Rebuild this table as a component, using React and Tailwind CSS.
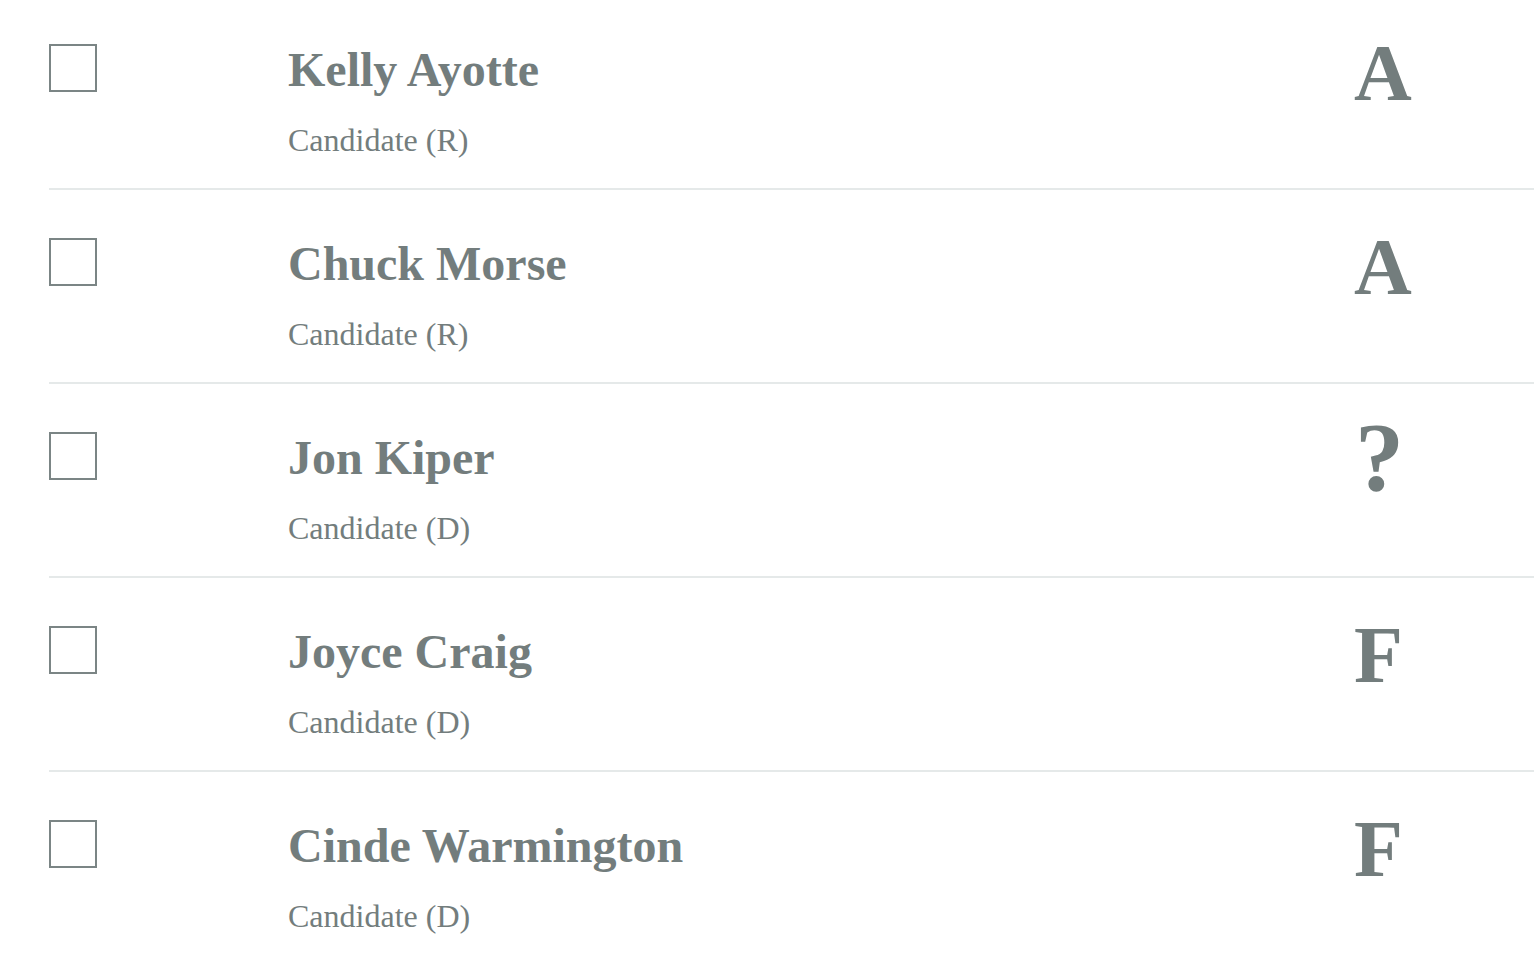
import React from "react";

const rows = [
  { name: "Kelly Ayotte", party: "R", grade: "A" },
  { name: "Chuck Morse", party: "R", grade: "A" },
  { name: "Jon Kiper", party: "D", grade: "?" },
  { name: "Joyce Craig", party: "D", grade: "F" },
  { name: "Cinde Warmington", party: "D", grade: "F" },
];

export default function App() {
  return (
    <div
      className="min-h-[974px] w-[1536px] bg-white text-[#737d7d]"
      style={{ fontFamily: '"Liberation Serif", "Times New Roman", serif' }}
    >
      <div className="ml-[49px] w-[1485px]">
        {rows.map((r, i) => (
          <div
            key={r.name}
            className={
              "box-border flex items-start " +
              (i < rows.length - 1 ? "border-b-2 border-[#e5e9e9] " : "") +
              (i === 0 ? "h-[190px] pt-[44px]" : "h-[194px] pt-[48px]")
            }
          >
            <div className="box-border h-12 w-12 shrink-0 border-2 border-[#7b8585] bg-white" />
            <div className="ml-[191px] mt-[2px] flex-1">
              <div className="text-[48px] font-bold leading-[48px]">{r.name}</div>
              <div className="mt-[30px] text-[32px] leading-[32px]">
                Candidate ({r.party})
              </div>
            </div>
            <div className="w-[182px] shrink-0 font-bold">
              {r.grade === "?" ? (
                <div className="mt-[-15px] pl-[3px] text-[98px] leading-[80px]">?</div>
              ) : (
                <div className="mt-[-11px] pl-[2px] text-[80px] leading-[80px]">{r.grade}</div>
              )}
            </div>
          </div>
        ))}
      </div>
    </div>
  );
}
